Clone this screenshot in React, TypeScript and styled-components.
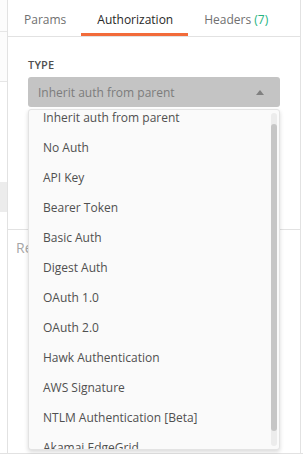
import React from 'react';
import styled, { createGlobalStyle } from 'styled-components';

const authTypes = [
  'Inherit auth from parent',
  'No Auth',
  'API Key',
  'Bearer Token',
  'Basic Auth',
  'Digest Auth',
  'OAuth 1.0',
  'OAuth 2.0',
  'Hawk Authentication',
  'AWS Signature',
  'NTLM Authentication [Beta]',
  'Akamai EdgeGrid',
];

const GlobalStyle = createGlobalStyle`
  html, body {
    margin: 0;
    padding: 0;
    background: #ffffff;
    font-family: "Open Sans", "Noto Sans", sans-serif;
  }
  * { box-sizing: border-box; }
`;

const App = () => {
  return (
    <>
      <GlobalStyle />
      <Page>
        <Side>
          <SideRow $h={32} />
          <SideRow $h={50} />
          <SideGap $h={100} />
          <SideActive />
        </Side>
        <Main>
          <Tabs>
            <Tab>Params</Tab>
            <Tab $active>Authorization</Tab>
            <Tab>Headers <Count>(7)</Count></Tab>
          </Tabs>
          <Body>
            <Label>TYPE</Label>
            <SelectWrap>
              <Select>
                <span>Inherit auth from parent</span>
                <Caret />
              </Select>
              <Menu>
                <MenuList>
                  {authTypes.map((t) => (
                    <MenuItem key={t}>{t}</MenuItem>
                  ))}
                </MenuList>
                <Track>
                  <Thumb />
                </Track>
              </Menu>
            </SelectWrap>
          </Body>
          <Response>Response</Response>
        </Main>
      </Page>
    </>
  );
};

const Page = styled.div`
  display: flex;
  width: 303px;
  height: 454px;
  border-bottom: 1px solid #e2e2e2;
`;
const Side = styled.div`
  width: 8px;
  flex-shrink: 0;
  border-right: 1px solid #e2e2e2;
  display: flex;
  flex-direction: column;
`;
const SideRow = styled.div<{ $h: number }>`
  height: ${(p) => p.$h}px;
  border-bottom: 1px solid #e6e6e6;
  background: #fcfcfc;
`;
const SideGap = styled.div<{ $h: number }>`
  height: ${(p) => p.$h}px;
`;
const SideActive = styled.div`
  height: 30px;
  background: #ececec;
`;
const Main = styled.div`
  width: 293px;
  display: flex;
  flex-direction: column;
  border-right: 1px solid #e2e2e2;
`;
const Tabs = styled.div`
  height: 37px;
  display: flex;
  align-items: stretch;
  border-bottom: 1px solid #e2e2e2;
`;
const Tab = styled.div<{ $active?: boolean }>`
  display: flex;
  align-items: center;
  padding: 6px 15px 0 16px;
  font-size: 12px;
  color: ${(p) => (p.$active ? '#282828' : '#707070')};
  border-bottom: 3px solid ${(p) => (p.$active ? '#f26b3a' : 'transparent')};
  white-space: pre;
`;
const Count = styled.span`
  color: #26b47f;
`;
const Body = styled.div`
  height: 193px;
  padding: 22px 20px 0;
  border-bottom: 1px solid #e2e2e2;
`;
const Label = styled.div`
  font-size: 11px;
  line-height: 12px;
  font-weight: 600;
  color: #505050;
  letter-spacing: 0.2px;
  margin-bottom: 6px;
`;
const SelectWrap = styled.div`
  position: relative;
`;
const Select = styled.div`
  height: 30px;
  background: #c4c4c4;
  border-radius: 3px;
  display: flex;
  align-items: center;
  justify-content: space-between;
  padding: 0 16px 0 10px;
  font-size: 12px;
  color: #7c7c7c;
`;
const Caret = styled.div`
  width: 0;
  height: 0;
  border-left: 4px solid transparent;
  border-right: 4px solid transparent;
  border-bottom: 5px solid #808080;
`;
const Menu = styled.div`
  position: absolute;
  top: 32px;
  left: 0;
  right: 0;
  height: 341px;
  background: #fafafa;
  border: 1px solid #e3e3e3;
  border-radius: 3px;
  box-shadow: 0 2px 4px rgba(0, 0, 0, 0.15);
  overflow: hidden;
  z-index: 2;
`;
const MenuList = styled.div`
  margin-top: -8px;
`;
const MenuItem = styled.div`
  height: 30px;
  display: flex;
  align-items: center;
  padding-left: 14px;
  font-size: 12px;
  color: #505050;
`;
const Track = styled.div`
  position: absolute;
  top: 3px;
  right: 2px;
  bottom: 3px;
  width: 6px;
  border-radius: 3px;
  background: #ececec;
  padding-top: 11px;
  padding-bottom: 15px;
  display: flex;
`;
const Thumb = styled.div`
  flex: 1;
  border-radius: 3px;
  background: #c6c6c6;
`;
const Response = styled.div`
  padding: 8px 0 0 8px;
  font-size: 14px;
  color: #a6a6a6;
`;

export default App;
